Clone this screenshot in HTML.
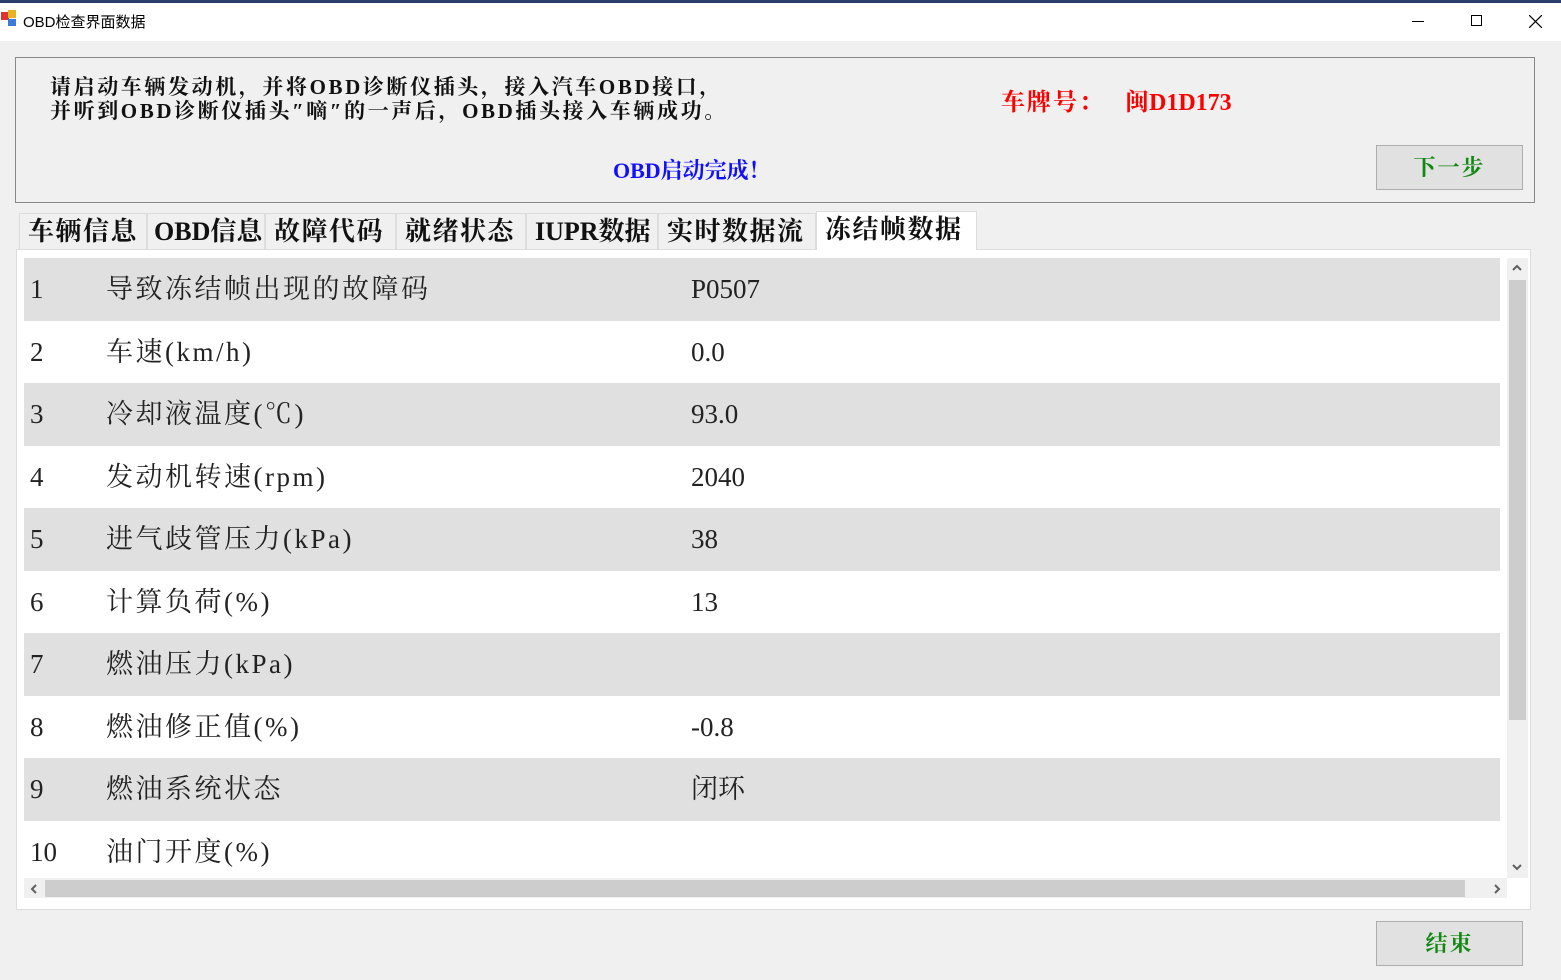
<!DOCTYPE html>
<html><head><meta charset="utf-8"><style>
*{margin:0;padding:0;box-sizing:border-box}
body{width:1561px;height:980px;background:#f0f0f0;position:relative;overflow:hidden;font-family:"Liberation Serif","Noto Serif CJK SC",serif}
.abs{position:absolute;white-space:nowrap}
.title{left:0;top:0;width:1561px;height:41px;background:#fff;border-top:3px solid #2b3f6b}
.tt{left:23px;top:11px;font:15px "Liberation Sans","Noto Sans CJK SC",sans-serif;color:#000}
.group{left:15px;top:57px;width:1520px;height:146px;border:1px solid #888}
.msg{left:50px;top:75px;font-size:21px;font-weight:bold;line-height:24px;color:#111;letter-spacing:2.6px}
.btn{background:#e1e1e1;border:1px solid #adadad;color:#118811;font-weight:bold;font-size:22px;text-align:center;letter-spacing:2px}
.tab{top:213px;height:36px;border:1px solid #ddd;border-bottom:none;font-size:26px;font-weight:bold;line-height:36px;padding-left:8px;color:#111;background:#f0f0f0;letter-spacing:1.5px;overflow:hidden}
.panel{left:16px;top:249px;width:1515px;height:661px;background:#fff;border:1px solid #ddd}
.row{left:24px;width:1476px;height:62.5px;font-size:27px;line-height:62px;color:#222}
.row span{position:absolute;white-space:nowrap}
.row span:nth-child(2){letter-spacing:2.5px}
.row span:nth-child(3){letter-spacing:0px}
</style></head><body>
<div class="abs title"></div>
<div class="abs" style="left:1px;top:12px;width:8px;height:8px;background:#d33"></div>
<div class="abs" style="left:8px;top:10px;width:8px;height:8px;background:#e9b320"></div>
<div class="abs" style="left:8px;top:19px;width:8px;height:7px;background:#3a7bd5"></div>
<div class="abs tt">OBD检查界面数据</div>
<div class="abs" style="left:1412px;top:21px;width:12px;height:1px;background:#000"></div>
<div class="abs" style="left:1471px;top:15px;width:11px;height:11px;border:1px solid #000"></div>
<svg class="abs" style="left:1529px;top:15px" width="13" height="13"><path d="M0 0L13 13M13 0L0 13" stroke="#000" stroke-width="1.2"/></svg>
<div class="abs group"></div>
<div class="abs msg">请启动车辆发动机，并将OBD诊断仪插头，接入汽车OBD接口，<br>并听到OBD诊断仪插头″嘀″的一声后，OBD插头接入车辆成功。</div>
<div class="abs" style="left:1001px;top:82px;font-size:24px;font-weight:bold;color:#f00;letter-spacing:2px">车牌号：</div>
<div class="abs" style="left:1125px;top:82px;font-size:24px;font-weight:bold;color:#f00">闽D1D173</div>
<div class="abs" style="left:613px;top:154px;font-size:22px;font-weight:bold;color:#1010ff">OBD启动完成！</div>
<div class="abs btn" style="left:1376px;top:145px;width:147px;height:45px;line-height:43px">下一步</div>
<div class="abs tab" style="left:19px;width:128px">车辆信息</div>
<div class="abs tab" style="left:147px;width:118px;padding-left:6px;letter-spacing:0">OBD信息</div>
<div class="abs tab" style="left:265px;width:131px">故障代码</div>
<div class="abs tab" style="left:396px;width:130px">就绪状态</div>
<div class="abs tab" style="left:526px;width:132px;letter-spacing:0">IUPR数据</div>
<div class="abs tab" style="left:658px;width:158px">实时数据流</div>
<div class="abs tab" style="left:816px;top:211px;width:161px;height:39px;background:#fff;z-index:2">冻结帧数据</div>
<div class="abs panel"></div>
<div class="abs row" style="top:258px;background:#e0e0e0"><span style="left:6px">1</span><span style="left:82px">导致冻结帧出现的故障码</span><span style="left:667px">P0507</span></div>
<div class="abs row" style="top:320.5px"><span style="left:6px">2</span><span style="left:82px">车速(km/h)</span><span style="left:667px">0.0</span></div>
<div class="abs row" style="top:383px;background:#e0e0e0"><span style="left:6px">3</span><span style="left:82px">冷却液温度(℃)</span><span style="left:667px">93.0</span></div>
<div class="abs row" style="top:445.5px"><span style="left:6px">4</span><span style="left:82px">发动机转速(rpm)</span><span style="left:667px">2040</span></div>
<div class="abs row" style="top:508px;background:#e0e0e0"><span style="left:6px">5</span><span style="left:82px">进气歧管压力(kPa)</span><span style="left:667px">38</span></div>
<div class="abs row" style="top:570.5px"><span style="left:6px">6</span><span style="left:82px">计算负荷(%)</span><span style="left:667px">13</span></div>
<div class="abs row" style="top:633px;background:#e0e0e0"><span style="left:6px">7</span><span style="left:82px">燃油压力(kPa)</span></div>
<div class="abs row" style="top:695.5px"><span style="left:6px">8</span><span style="left:82px">燃油修正值(%)</span><span style="left:667px">-0.8</span></div>
<div class="abs row" style="top:758px;background:#e0e0e0"><span style="left:6px">9</span><span style="left:82px">燃油系统状态</span><span style="left:667px">闭环</span></div>
<div class="abs row" style="top:820.5px;height:57px;overflow:hidden"><span style="left:6px">10</span><span style="left:82px">油门开度(%)</span></div>
<div class="abs" style="left:1507px;top:258px;width:21px;height:620px;background:#f0f0f0"></div>
<div class="abs" style="left:1509px;top:280px;width:17px;height:440px;background:#cdcdcd"></div>
<svg class="abs" style="left:1511px;top:263px" width="12" height="10"><path d="M2 7L6 3L10 7" stroke="#606060" stroke-width="2" fill="none"/></svg>
<svg class="abs" style="left:1511px;top:862px" width="12" height="10"><path d="M2 3L6 7L10 3" stroke="#606060" stroke-width="2" fill="none"/></svg>
<div class="abs" style="left:24px;top:878px;width:1483px;height:20px;background:#f0f0f0"></div>
<div class="abs" style="left:45px;top:880px;width:1420px;height:17px;background:#cdcdcd"></div>
<svg class="abs" style="left:29px;top:883px" width="10" height="12"><path d="M7 2L3 6L7 10" stroke="#606060" stroke-width="2" fill="none"/></svg>
<svg class="abs" style="left:1492px;top:883px" width="10" height="12"><path d="M3 2L7 6L3 10" stroke="#606060" stroke-width="2" fill="none"/></svg>
<div class="abs btn" style="left:1376px;top:921px;width:147px;height:45px;line-height:43px">结束</div>
</body></html>
